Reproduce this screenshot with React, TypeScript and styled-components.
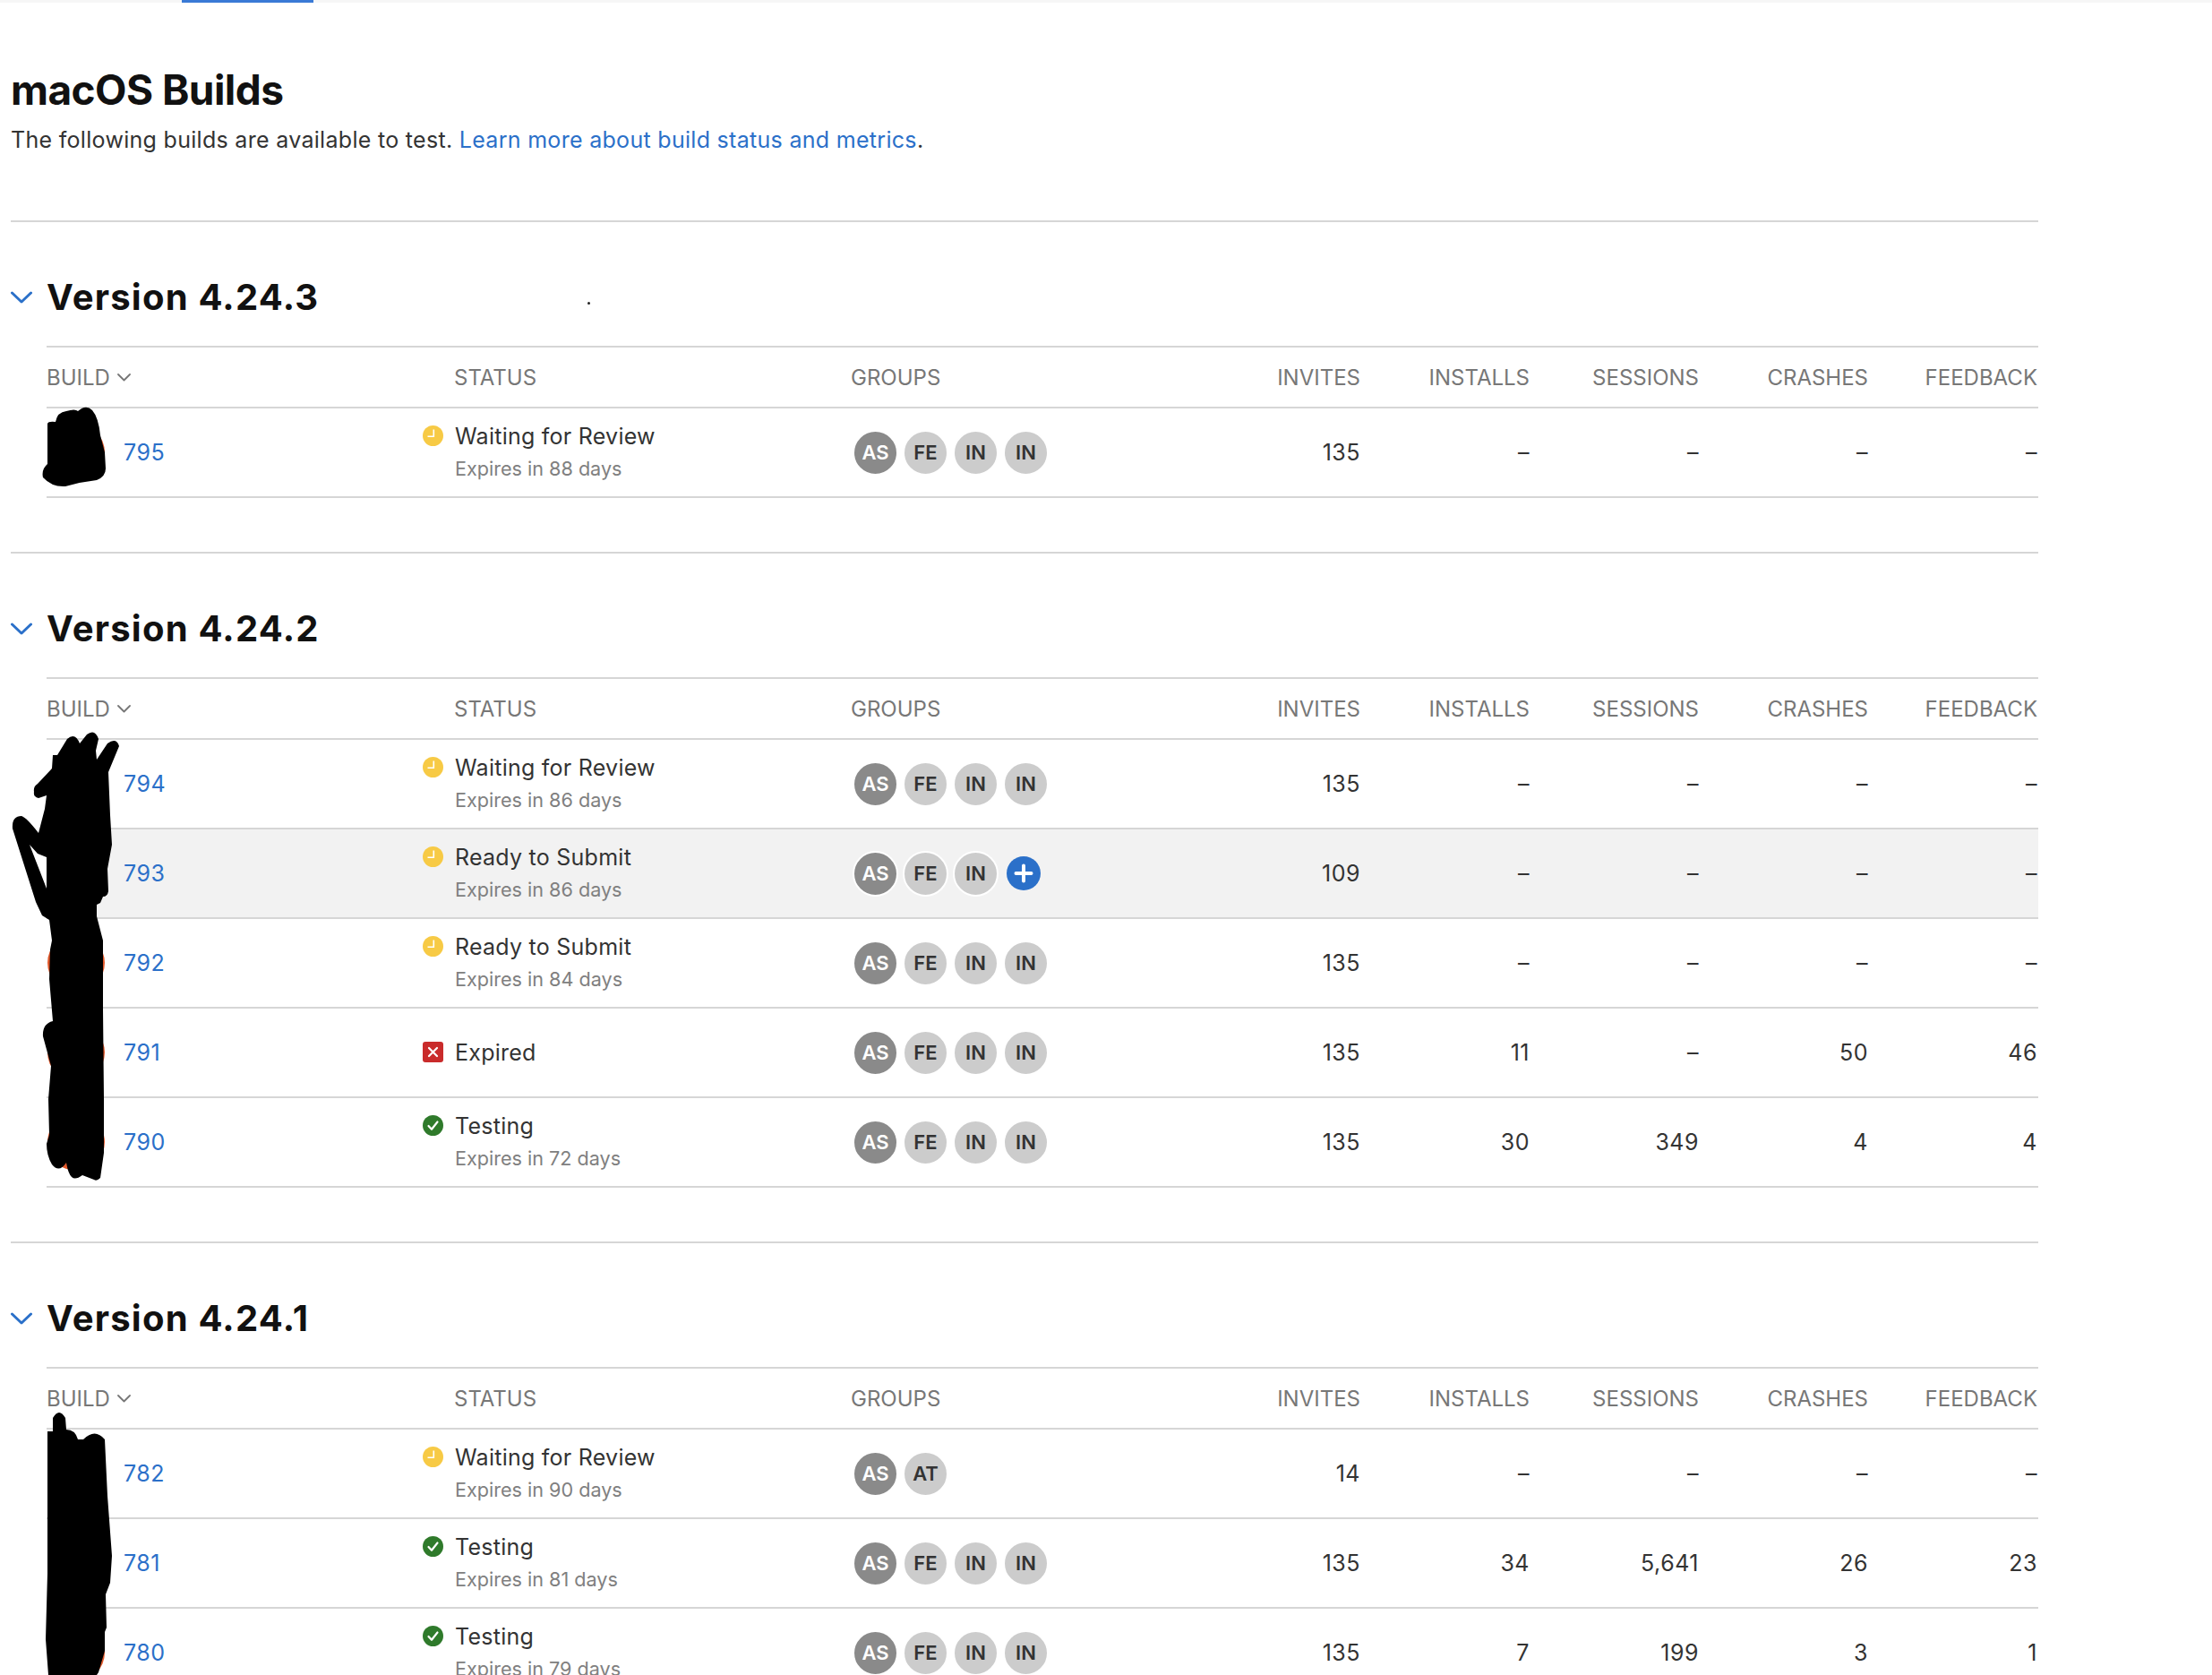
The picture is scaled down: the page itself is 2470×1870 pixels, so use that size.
import React from "react";
import styled, { createGlobalStyle } from "styled-components";

const Blue = "#2b70c9";
const LineGrey = "#d6d6d6";

const GlobalStyle = createGlobalStyle`
  html, body {
    margin: 0;
    padding: 0;
    background: #fff;
  }
  body {
    font-family: Inter, "Liberation Sans", sans-serif;
    color: #333;
    overflow: hidden;
  }
`;

const Screen = styled.div`
  position: relative;
  width: 2470px;
  height: 1870px;
  overflow: hidden;
  background: #fff;
`;

const TopBar = styled.div`
  height: 3px;
  background: #f6f6f6;
  padding-left: 203px;
`;

const ActiveTab = styled.div`
  width: 147px;
  height: 3px;
  background: #3a7ad6;
`;

const Content = styled.div`
  width: 2264px;
  margin-left: 12px;
`;

const Intro = styled.div`
  padding-top: 69px;
  height: 174px;
`;

const Title = styled.h1`
  margin: 0 0 10px;
  font-size: 46px;
  line-height: 56px;
  font-weight: 700;
  letter-spacing: -0.55px;
  color: #111;
`;

const Lead = styled.p`
  margin: 0;
  font-size: 25px;
  line-height: 36px;
  letter-spacing: 0.3px;
  color: #333;
`;

const TextLink = styled.a`
  color: ${Blue};
  text-decoration: none;
`;

const Section = styled.section`
  border-top: 2px solid ${LineGrey};
  margin-bottom: 60px;
`;

const VersionHead = styled.div`
  position: relative;
  display: flex;
  align-items: center;
  height: 138px;
  padding: 30px 0 0;
  box-sizing: border-box;
  gap: 16px;
`;

const VersionTitle = styled.h2`
  margin: 0;
  font-size: 40px;
  line-height: 56px;
  font-weight: 700;
  letter-spacing: 1.22px;
  color: #111;
`;

const Speck = styled.span`
  position: absolute;
  left: 644px;
  top: 89px;
  width: 3px;
  height: 3px;
  border-radius: 50%;
  background: #222;
`;

const Table = styled.div`
  margin-left: 40px;
  border-bottom: 2px solid ${LineGrey};
`;

const columns = "420px 478px 380px repeat(5, 189px)";

const HeaderRow = styled.div`
  display: grid;
  grid-template-columns: ${columns};
  align-items: center;
  height: 68px;
  box-sizing: border-box;
  border-top: 2px solid ${LineGrey};
  font-size: 24px;
  color: #777;
`;

const HeaderCell = styled.div<{ $inset?: number; $right?: boolean }>`
  display: flex;
  align-items: center;
  gap: 8px;
  padding-left: ${(p) => p.$inset || 0}px;
  justify-content: ${(p) => (p.$right ? "flex-end" : "flex-start")};
`;

const Row = styled.div<{ $active?: boolean }>`
  display: grid;
  grid-template-columns: ${columns};
  align-items: center;
  height: 100px;
  box-sizing: border-box;
  border-top: 2px solid ${LineGrey};
  background: ${(p) => (p.$active ? "#f2f2f2" : "transparent")};
`;

const BuildCell = styled.div`
  display: flex;
  align-items: center;
  gap: 21px;
  padding-left: 1px;
`;

const AppIcon = styled.span`
  width: 64px;
  height: 64px;
  border-radius: 50%;
  background: #e2592b;
`;

const BuildLink = styled.a`
  color: ${Blue};
  font-size: 25px;
  letter-spacing: 0.5px;
  text-decoration: none;
`;

const StatusCell = styled.div`
  display: flex;
  align-items: flex-start;
  gap: 13px;
`;

const StatusGlyph = styled.svg`
  flex: none;
  width: 23px;
  height: 23px;
  margin-top: 6px;
`;

const StatusText = styled.div`
  display: flex;
  flex-direction: column;
`;

const StatusName = styled.span`
  font-size: 25px;
  line-height: 36px;
  letter-spacing: 0.25px;
  color: #333;
`;

const Expiry = styled.span`
  font-size: 21.6px;
  line-height: 36px;
  color: #808080;
`;

const Groups = styled.div`
  display: flex;
  align-items: center;
  gap: 5px;
  padding-left: 2px;
`;

const GroupBadge = styled.span<{ $dark?: boolean }>`
  display: flex;
  align-items: center;
  justify-content: center;
  width: 51px;
  height: 51px;
  box-sizing: border-box;
  border: 2px solid #fff;
  border-radius: 50%;
  font-size: 22px;
  font-weight: 600;
  background: ${(p) => (p.$dark ? "#8a8a8a" : "#cccccc")};
  color: ${(p) => (p.$dark ? "#fff" : "#333")};
`;

const AddGroup = styled.svg`
  width: 38px;
  height: 38px;
  margin-left: 4px;
`;

const Metric = styled.div`
  font-size: 25px;
  letter-spacing: 0.5px;
  text-align: right;
  color: #333;
`;

const Scribbles = styled.svg`
  position: absolute;
  left: 0;
  top: 0;
  pointer-events: none;
`;

const Chevron = ({ size }: { size: "large" | "small" }) =>
  size === "large" ? (
    <svg width="24" height="14" viewBox="0 0 24 14" fill="none">
      <path d="M1.5 2 L12 12 L22.5 2" stroke={Blue} strokeWidth="3" strokeLinecap="round" strokeLinejoin="round" />
    </svg>
  ) : (
    <svg width="15" height="9" viewBox="0 0 15 9" fill="none">
      <path d="M1 1 L7.5 7.5 L14 1" stroke="#777" strokeWidth="1.8" strokeLinecap="round" strokeLinejoin="round" />
    </svg>
  );

type StatusKind = "waiting" | "expired" | "testing";

const StatusIcon = ({ kind }: { kind: StatusKind }) => {
  if (kind === "expired") {
    return (
      <StatusGlyph viewBox="0 0 23 23">
        <rect width="23" height="23" rx="3" fill="#c92b2b" />
        <path d="M7 7 L16 16 M16 7 L7 16" stroke="#fff" strokeWidth="2.2" strokeLinecap="round" />
      </StatusGlyph>
    );
  }
  if (kind === "testing") {
    return (
      <StatusGlyph viewBox="0 0 23 23">
        <circle cx="11.5" cy="11.5" r="11.5" fill="#2f7a2b" />
        <path d="M6.5 12 L10 15.8 L16.5 7.5" fill="none" stroke="#fff" strokeWidth="2.2" strokeLinecap="round" strokeLinejoin="round" />
      </StatusGlyph>
    );
  }
  return (
    <StatusGlyph viewBox="0 0 23 23">
      <circle cx="11.5" cy="11.5" r="11.5" fill="#f7ca45" />
      <path d="M12.3 4.5 V12.3 H5.5" fill="none" stroke="#fff" strokeWidth="1.6" />
    </StatusGlyph>
  );
};

interface BuildRow {
  build: number;
  kind: StatusKind;
  status: string;
  expiry?: string;
  groups: string[];
  plus?: boolean;
  metrics: string[];
  active?: boolean;
}

const allGroups = ["AS", "FE", "IN", "IN"];
const noData = ["–", "–", "–", "–"];

const sections: { version: string; speck?: boolean; rows: BuildRow[] }[] = [
  {
    version: "Version 4.24.3",
    speck: true,
    rows: [
      { build: 795, kind: "waiting", status: "Waiting for Review", expiry: "Expires in 88 days", groups: allGroups, metrics: ["135", ...noData] },
    ],
  },
  {
    version: "Version 4.24.2",
    rows: [
      { build: 794, kind: "waiting", status: "Waiting for Review", expiry: "Expires in 86 days", groups: allGroups, metrics: ["135", ...noData] },
      { build: 793, kind: "waiting", status: "Ready to Submit", expiry: "Expires in 86 days", groups: ["AS", "FE", "IN"], plus: true, metrics: ["109", ...noData], active: true },
      { build: 792, kind: "waiting", status: "Ready to Submit", expiry: "Expires in 84 days", groups: allGroups, metrics: ["135", ...noData] },
      { build: 791, kind: "expired", status: "Expired", groups: allGroups, metrics: ["135", "11", "–", "50", "46"] },
      { build: 790, kind: "testing", status: "Testing", expiry: "Expires in 72 days", groups: allGroups, metrics: ["135", "30", "349", "4", "4"] },
    ],
  },
  {
    version: "Version 4.24.1",
    rows: [
      { build: 782, kind: "waiting", status: "Waiting for Review", expiry: "Expires in 90 days", groups: ["AS", "AT"], metrics: ["14", ...noData] },
      { build: 781, kind: "testing", status: "Testing", expiry: "Expires in 81 days", groups: allGroups, metrics: ["135", "34", "5,641", "26", "23"] },
      { build: 780, kind: "testing", status: "Testing", expiry: "Expires in 79 days", groups: allGroups, metrics: ["135", "7", "199", "3", "1"] },
    ],
  },
];

const metricHeads = ["INVITES", "INSTALLS", "SESSIONS", "CRASHES", "FEEDBACK"];

const BuildTableRow = ({ row }: { row: BuildRow }) => (
  <Row $active={row.active}>
    <BuildCell>
      <AppIcon />
      <BuildLink>{row.build}</BuildLink>
    </BuildCell>
    <StatusCell>
      <StatusIcon kind={row.kind} />
      <StatusText>
        <StatusName>{row.status}</StatusName>
        {row.expiry && <Expiry>{row.expiry}</Expiry>}
      </StatusText>
    </StatusCell>
    <Groups>
      {row.groups.map((g, i) => (
        <GroupBadge key={i} $dark={g === "AS"}>
          {g}
        </GroupBadge>
      ))}
      {row.plus && (
        <AddGroup viewBox="0 0 38 38">
          <circle cx="19" cy="19" r="19" fill={Blue} />
          <path d="M19 10.5 V27.5 M10.5 19 H27.5" stroke="#fff" strokeWidth="4" strokeLinecap="round" />
        </AddGroup>
      )}
    </Groups>
    {row.metrics.map((m, i) => (
      <Metric key={i}>{m}</Metric>
    ))}
  </Row>
);

// marker scribbles that hide the app icons in the screenshot
const MarkerScribbles = () => (
  <Scribbles width="180" height="1870" viewBox="0 0 180 1870" fill="#000">
    <path d="M53 473 Q54 470 62 471 Q64 460 74 459 Q84 456 87 459 Q96 451 103 458 Q110 466 112 486 L117 505 L118 523 Q118 532 108 536 Q90 538 73 543 Q58 544 48 533 Q46 524 53 518 Z" />
    <path
      fillRule="evenodd"
      d="M38 884 Q37 878 42 875 L58 858 L59 843 L64 843 L75 825 Q84 817 89 830 L97 820 Q106 813 110 825 L107 838 L108 848 L120 830 Q130 823 133 833 L121 862 L123 910 L125 943 L120 970 L121 995 Q120 1001 115 1001 L112 1008 L108 1010 L108 1023 L115 1050 L115 1127 L116 1227 L116 1287 L112 1315 Q108 1319 105 1317 L92 1312 Q84 1318 80 1314 Q76 1310 74 1298 Q66 1310 58 1300 Q52 1290 52 1277 L55 1267 L54 1227 L57 1190 L48 1157 Q47 1143 59 1140 L55 1093 L56 1060 L58 1050 L55 1027 L47 1022 L40 1007 L14 925 Q13 911 24 911 Q30 913 43 930 L50 903 L52 888 L43 891 Q37 890 38 884 Z M33 943 L42 953 L52 957 L52 992 Z"
    />
    <path d="M59 1598 L59 1583 Q66 1571 73 1583 L74 1596 Q84 1596 87 1607 L93 1607 Q106 1594 117 1607 L120 1670 L125 1737 L123 1767 L118 1780 L119 1817 L117 1822 L117 1843 L110 1867 L108 1870 L54 1870 L51 1830 L53 1757 L53 1598 Z" />
  </Scribbles>
);

export default function App() {
  return (
    <Screen>
      <GlobalStyle />
      <TopBar>
        <ActiveTab />
      </TopBar>
      <Content>
        <Intro>
          <Title>macOS Builds</Title>
          <Lead>
            The following builds are available to test.{" "}
            <TextLink>Learn more about build status and metrics</TextLink>.
          </Lead>
        </Intro>
        {sections.map((section) => (
          <Section key={section.version}>
            <VersionHead>
              <Chevron size="large" />
              <VersionTitle>{section.version}</VersionTitle>
              {section.speck && <Speck />}
            </VersionHead>
            <Table>
              <HeaderRow>
                <HeaderCell>
                  BUILD <Chevron size="small" />
                </HeaderCell>
                <HeaderCell $inset={35}>STATUS</HeaderCell>
                <HeaderCell>GROUPS</HeaderCell>
                {metricHeads.map((h) => (
                  <HeaderCell key={h} $right>
                    {h}
                  </HeaderCell>
                ))}
              </HeaderRow>
              {section.rows.map((row) => (
                <BuildTableRow key={row.build} row={row} />
              ))}
            </Table>
          </Section>
        ))}
      </Content>
      <MarkerScribbles />
    </Screen>
  );
}
